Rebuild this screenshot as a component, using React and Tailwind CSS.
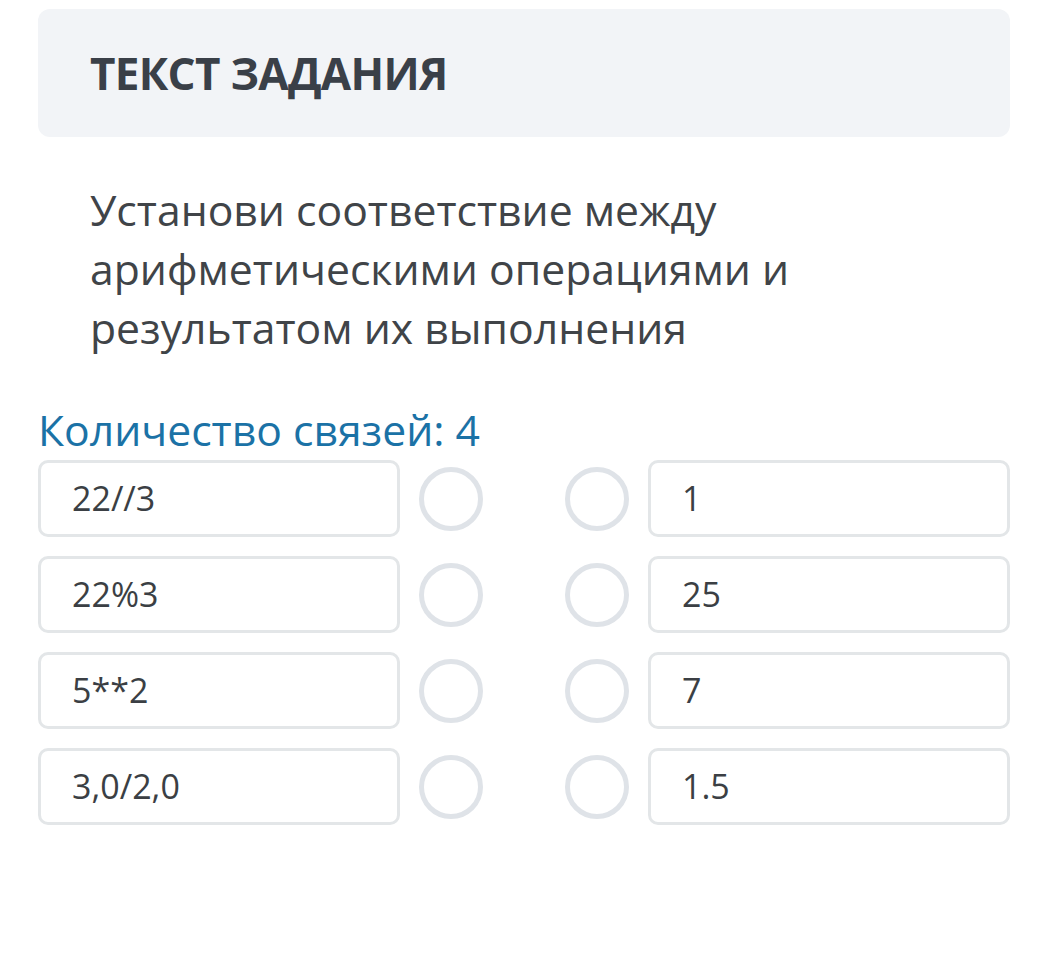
import React from 'react';

const rows = [
    ['22//3', '1'],
    ['22%3', '25'],
    ['5**2', '7'],
    ['3,0/2,0', '1.5'],
];

const Circle = () => (
    <div className="w-[64px] h-[64px] rounded-full border-[5px] border-[#dfe3e8] shrink-0" />
);

const Cell = ({ children }) => (
    <div className="w-[362px] h-[77px] shrink-0 rounded-[10px] border-[3px] border-[#e3e6e8] flex items-center pl-[31px] text-[34px] text-[#3b3f44]">
        {children}
    </div>
);

export default function App() {
    return (
        <div className="bg-white w-[1064px] min-h-[975px] px-[38px] pt-[9px]" style={{ fontFamily: '"Open Sans", sans-serif' }}>
            <div className="h-[128px] w-[972px] rounded-xl bg-[#f2f4f7] flex items-center pl-[52px]">
                <h1 className="text-[44px] font-bold text-[#3a4048] tracking-[-0.7px]">ТЕКСТ ЗАДАНИЯ</h1>
            </div>

            <p className="mt-[43px] pl-[52px] pr-[100px] text-[42.7px] leading-[59px] text-[#404448]">
                Установи соответствие между арифметическими операциями и результатом их выполнения
            </p>

            <div className="mt-[44px] text-[42.7px] leading-[58px] text-[#1b72a6]">Количество связей: 4</div>

            <div className="flex flex-col gap-[19px] pt-[1px]">
                {rows.map(([left, right]) => (
                    <div key={left} className="flex items-center">
                        <Cell>{left}</Cell>
                        <div className="ml-[19px]"><Circle /></div>
                        <div className="ml-[82px]"><Circle /></div>
                        <div className="ml-[19px]"><Cell>{right}</Cell></div>
                    </div>
                ))}
            </div>
        </div>
    );
}
